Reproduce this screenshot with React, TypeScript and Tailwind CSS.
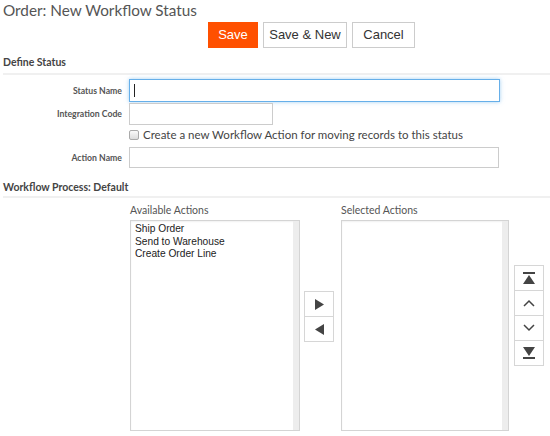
import React from "react";

const lato = { fontFamily: "Lato, 'Open Sans', sans-serif" };
const arial = { fontFamily: "'Liberation Sans', Arial, sans-serif" };

function TopButton({ label, primary, w }: { label: string; primary?: boolean; w: string }) {
  return (
    <button
      type="button"
      style={arial}
      className={
        primary
          ? `${w} h-[26px] bg-[#ff5000] text-[13px] text-white`
          : `${w} h-[26px] border border-[#ccc] bg-white text-[13px] text-[#333]`
      }
    >
      {label}
    </button>
  );
}

function FieldLabel({ children }: { children: React.ReactNode }) {
  return (
    <div style={lato} className="w-[122px] shrink-0 text-right text-[8.7px] font-bold text-[#555]">
      {children}
    </div>
  );
}

function ListBox({ items }: { items: string[] }) {
  return (
    <div className="relative h-[211px] border border-[#d4d4d4] bg-white shadow-[inset_0_1px_2px_rgba(0,0,0,0.06)]">
      <div style={arial} className="px-[4px] pt-[2px] text-[10.2px] leading-[12.5px] text-[#222]">
        {items.map((it) => (
          <div key={it}>{it}</div>
        ))}
      </div>
      <div className="absolute right-0 top-0 h-full w-[6px] bg-[#ededed]" />
    </div>
  );
}

function IconButton({ children, first }: { children: React.ReactNode; first?: boolean }) {
  return (
    <button
      type="button"
      className={`flex h-[26px] w-[30px] items-center justify-center border border-[#d6d6d6] bg-white ${first ? "" : "-mt-px"}`}
    >
      {children}
    </button>
  );
}

export default function App() {
  return (
    <div className="h-[436px] w-[550px] overflow-hidden bg-white">
      <div style={lato} className="h-[20px] pl-[3px] text-[15.3px] leading-[20px] text-[#555]">
        Order: New Workflow Status
      </div>

      <div className="mt-[2px] flex gap-[5px] pl-[208px]">
        <TopButton label="Save" primary w="w-[50px]" />
        <TopButton label="Save & New" w="w-[84px]" />
        <TopButton label="Cancel" w="w-[63px]" />
      </div>

      <div style={lato} className="mt-[6px] h-[16px] pl-[3px] text-[10.5px] font-bold leading-[16px] text-[#444]">
        Define Status
      </div>
      <div className="ml-[3px] mt-[3px] h-[2px] bg-[#f0f0f0]" />

      <div className="mt-[4px] flex items-center gap-[7px]">
        <FieldLabel>Status Name</FieldLabel>
        <div className="flex h-[23px] w-[371px] items-center border border-[#66afe9] bg-white pl-[4px] shadow-[0_0_4px_rgba(102,175,233,0.6)]">
          <div className="h-[13px] w-px bg-[#222]" />
        </div>
      </div>

      <div className="mt-[1px] flex items-center gap-[7px]">
        <FieldLabel>Integration Code</FieldLabel>
        <div className="h-[22px] w-[144px] border border-[#ccc] bg-white" />
      </div>

      <div className="mt-[2px] flex h-[16px] items-center gap-[4px] pl-[129px]">
        <div className="h-[10px] w-[10px] rounded-[2px] border border-[#aaa] bg-gradient-to-b from-[#fafafa] to-[#dcdcdc]" />
        <span style={lato} className="text-[11.5px] text-[#444]">
          Create a new Workflow Action for moving records to this status
        </span>
      </div>

      <div className="mt-[4px] flex items-center gap-[7px]">
        <FieldLabel>Action Name</FieldLabel>
        <div className="h-[21px] w-[370px] border border-[#ccc] bg-white" />
      </div>

      <div style={lato} className="mt-[11px] h-[16px] pl-[3px] text-[10.5px] font-bold leading-[16px] text-[#444]">
        Workflow Process: Default
      </div>
      <div className="ml-[3px] mt-[1px] h-[2px] bg-[#f0f0f0]" />

      <div className="mt-[4px] flex items-start pl-[130px]">
        <div className="w-[170px]">
          <div style={lato} className="h-[16px] text-[10.5px] leading-[16px] text-[#555]">
            Available Actions
          </div>
          <div className="mt-[2px]">
            <ListBox items={["Ship Order", "Send to Warehouse", "Create Order Line"]} />
          </div>
        </div>

        <div className="ml-[4px] mt-[89px] flex flex-col">
          <IconButton first>
            <svg width="9" height="11" viewBox="0 0 9 11">
              <path d="M0 0 L9 5.5 L0 11 Z" fill="#444" />
            </svg>
          </IconButton>
          <IconButton>
            <svg width="9" height="11" viewBox="0 0 9 11">
              <path d="M9 0 L0 5.5 L9 11 Z" fill="#444" />
            </svg>
          </IconButton>
        </div>

        <div className="ml-[7px] w-[168px]">
          <div style={lato} className="h-[16px] text-[10.5px] leading-[16px] text-[#555]">
            Selected Actions
          </div>
          <div className="mt-[2px]">
            <ListBox items={[]} />
          </div>
        </div>

        <div className="ml-[5px] mt-[63px] flex flex-col">
          <IconButton first>
            <svg width="12" height="12" viewBox="0 0 12 12">
              <rect x="0" y="0" width="12" height="2" fill="#444" />
              <path d="M6 3 L12 12 L0 12 Z" fill="#444" />
            </svg>
          </IconButton>
          <IconButton>
            <svg width="12" height="8" viewBox="0 0 12 8">
              <path d="M1 7 L6 2 L11 7" fill="none" stroke="#444" strokeWidth="1.5" />
            </svg>
          </IconButton>
          <IconButton>
            <svg width="12" height="8" viewBox="0 0 12 8">
              <path d="M1 1 L6 6 L11 1" fill="none" stroke="#444" strokeWidth="1.5" />
            </svg>
          </IconButton>
          <IconButton>
            <svg width="12" height="12" viewBox="0 0 12 12">
              <path d="M0 0 L12 0 L6 9 Z" fill="#444" />
              <rect x="0" y="10" width="12" height="2" fill="#444" />
            </svg>
          </IconButton>
        </div>
      </div>
    </div>
  );
}
